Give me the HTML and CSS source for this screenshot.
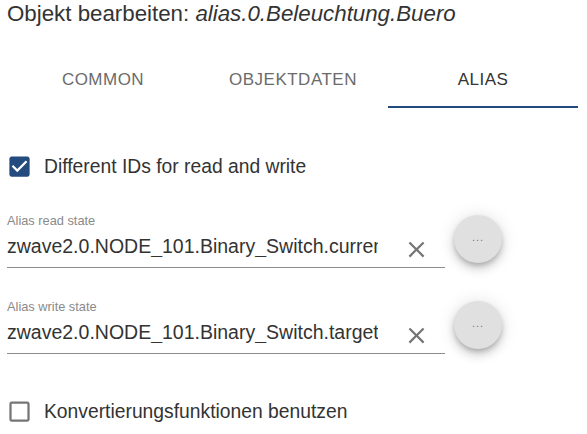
FILE: index.html
```html
<!DOCTYPE html>
<html lang="de">
<head>
  <meta charset="UTF-8">
  <title>Objekt bearbeiten</title>
  <link rel="stylesheet" href="styles.css">
</head>
<body>

  <div class="dialog">
    <h2 class="title">Objekt bearbeiten: <i>alias.0.Beleuchtung.Buero</i></h2>

    <div class="tabs">
      <div class="tab">Common</div>
      <div class="tab">Objektdaten</div>
      <div class="tab active">Alias</div>
    </div>

    <label class="check-row row-ids">
      <svg class="check-icon checked" viewBox="0 0 24 24"><path d="M19 3H5c-1.11 0-2 .9-2 2v14c0 1.1.89 2 2 2h14c1.11 0 2-.9 2-2V5c0-1.1-.89-2-2-2zm-9 14l-5-5 1.41-1.41L10 14.17l7.59-7.59L19 8l-9 9z"/></svg>
      <span>Different IDs for read and write</span>
    </label>

    <div class="field-row row-read">
      <div class="field">
        <div class="field-label">Alias read state</div>
        <div class="field-input">
          <input type="text" value="zwave2.0.NODE_101.Binary_Switch.currentValue">
          <svg class="clear-icon" viewBox="0 0 24 24"><path d="M19 6.41L17.59 5 12 10.59 6.41 5 5 6.41 10.59 12 5 17.59 6.41 19 12 13.41 17.59 19 19 17.59 13.41 12z"/></svg>
        </div>
      </div>
      <button class="fab">...</button>
    </div>

    <div class="field-row row-write">
      <div class="field">
        <div class="field-label">Alias write state</div>
        <div class="field-input">
          <input type="text" value="zwave2.0.NODE_101.Binary_Switch.targetValue">
          <svg class="clear-icon" viewBox="0 0 24 24"><path d="M19 6.41L17.59 5 12 10.59 6.41 5 5 6.41 10.59 12 5 17.59 6.41 19 12 13.41 17.59 19 19 17.59 13.41 12z"/></svg>
        </div>
      </div>
      <button class="fab">...</button>
    </div>

    <label class="check-row row-conv">
      <svg class="check-icon" viewBox="0 0 24 24"><path d="M19 5v14H5V5h14m0-2H5c-1.1 0-2 .9-2 2v14c0 1.1.9 2 2 2h14c1.1 0 2-.9 2-2V5c0-1.1-.9-2-2-2z"/></svg>
      <span>Konvertierungsfunktionen benutzen</span>
    </label>
  </div>

</body>
</html>
```

FILE: styles.css
```css
body, html {
  margin: 0;
  padding: 0;
  font-family: 'Liberation Sans', Arial, sans-serif;
  background-color: #ffffff;
  color: #333333;
}

.dialog {
  padding: 0 0 0 7px;
}

.title {
  margin: 0;
  padding-top: 1px;
  font-size: 22.3px;
  font-weight: 400;
  line-height: 26px;
  color: #333333;
}

.tabs {
  display: flex;
  margin: 33px 0 0 1px;
}

.tab {
  width: 190px;
  height: 48px;
  box-sizing: border-box;
  padding-top: 8px;
  font-size: 17px;
  line-height: 24px;
  letter-spacing: 0.02857em;
  text-transform: uppercase;
  text-align: center;
  color: #6b6b6b;
}

.tab.active {
  color: #333333;
  border-bottom: 2px solid #244b7e;
}

.check-row {
  display: flex;
  align-items: center;
  gap: 11px;
  margin-left: -1px;
  font-size: 19.3px;
  line-height: 24px;
  color: #333333;
}

.row-ids {
  margin-top: 45px;
}

.row-conv {
  margin-top: 44px;
}

.check-icon {
  width: 27px;
  height: 27px;
  fill: #757575;
}

.check-icon.checked {
  fill: #244b7e;
}

.field-row {
  display: flex;
  align-items: flex-start;
}

.row-read {
  margin-top: 33px;
}

.row-write {
  margin-top: 31px;
}

.field {
  width: 438px;
}

.field-label {
  font-size: 12.8px;
  line-height: 15px;
  color: #8a8a8a;
}

.field-input {
  display: flex;
  align-items: center;
  padding: 6px 0 10px;
  border-bottom: 1px solid #8c8c8c;
}

.field-input input {
  flex: 1;
  min-width: 0;
  border: none;
  outline: none;
  padding: 0 3px 0 0;
  margin: 0;
  font-family: inherit;
  font-size: 19.5px;
  line-height: 22px;
  height: 22px;
  color: #333333;
  background: transparent;
}

.clear-icon {
  width: 27px;
  height: 27px;
  margin: 2px 15px -6px 22px;
  fill: #757575;
}

.fab {
  width: 48px;
  height: 48px;
  margin: 2px 0 0 9px;
  border: none;
  border-radius: 50%;
  background-color: #e0e0e0;
  color: #777777;
  font-family: inherit;
  font-size: 11px;
  letter-spacing: 1px;
  padding: 0 0 4px;
  box-shadow: 0 3px 5px -1px rgba(0, 0, 0, 0.2), 0 6px 10px 0 rgba(0, 0, 0, 0.14), 0 1px 18px 0 rgba(0, 0, 0, 0.12);
  cursor: pointer;
}
```
